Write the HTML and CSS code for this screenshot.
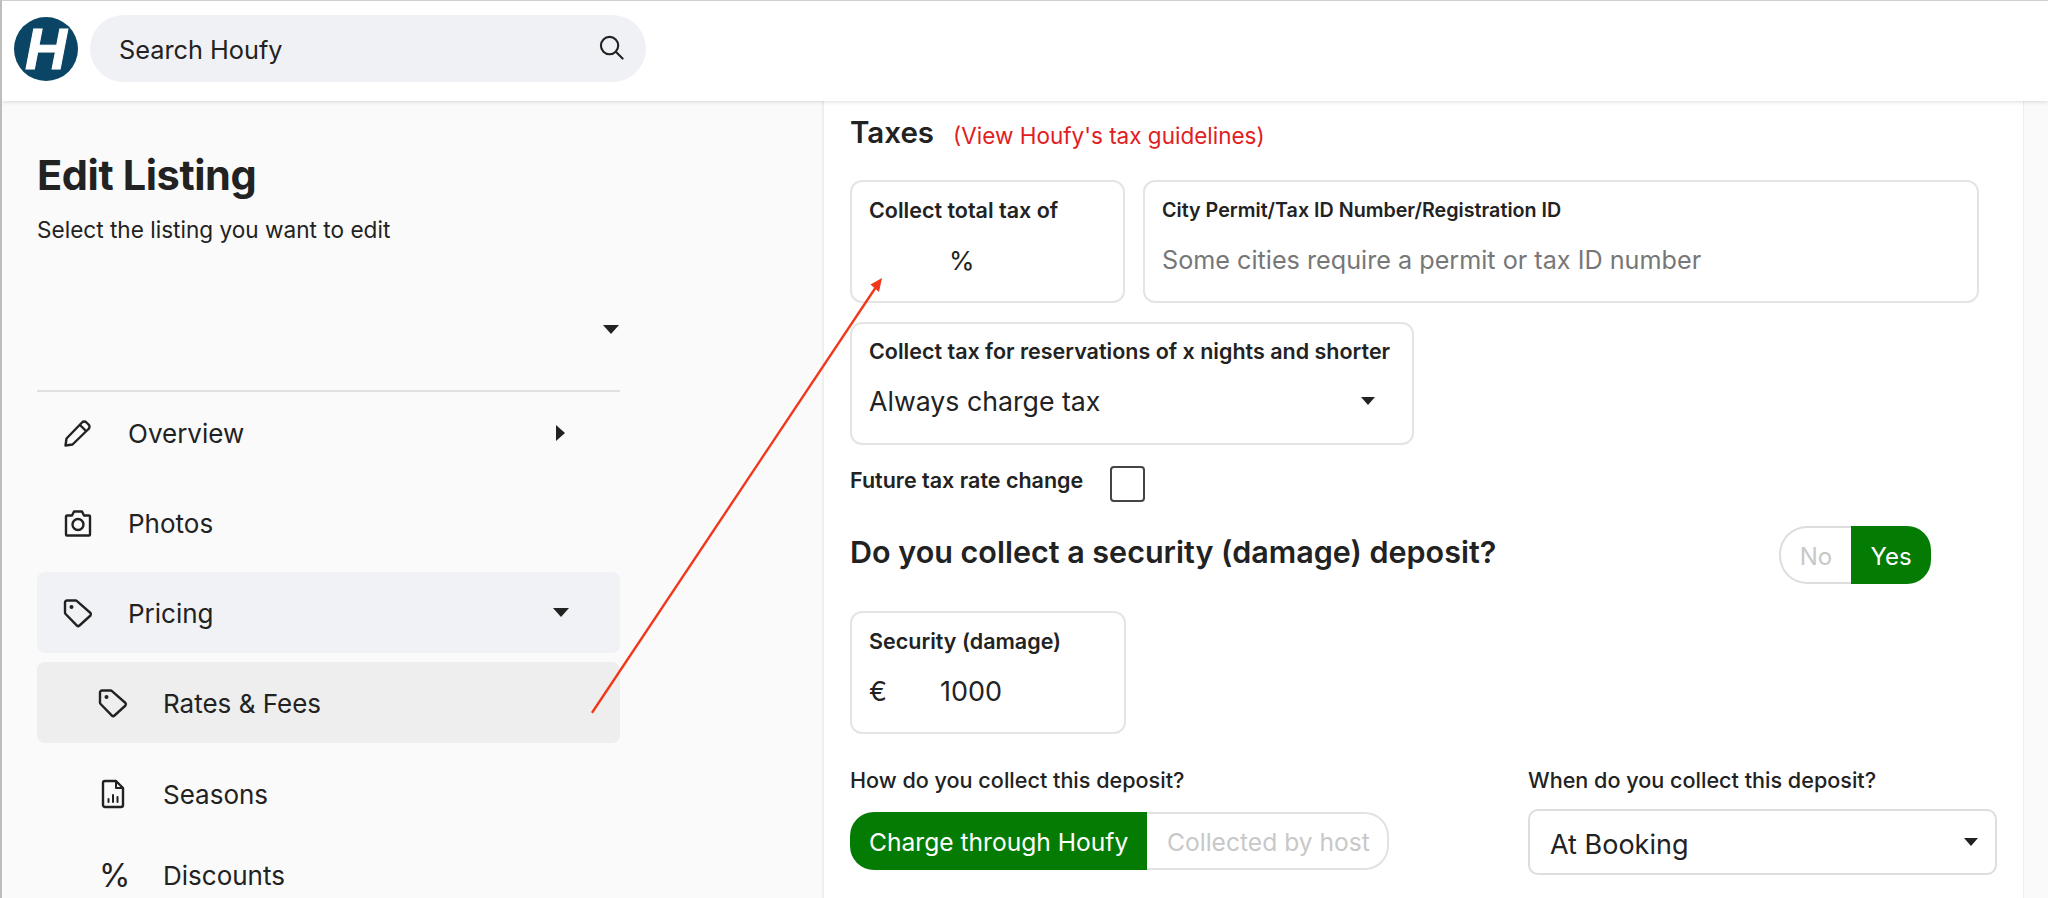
FILE: index.html
```html
<!DOCTYPE html>
<html lang="en">
<head>
<meta charset="utf-8">
<title>Edit Listing</title>
<link rel="stylesheet" href="styles.css">
</head>
<body>
<div class="page">
  <header class="topbar">
    <div class="logo"><span class="logo-h">H</span></div>
    <div class="search">
      <span class="search-text">Search Houfy</span>
      <svg class="search-icon" viewBox="0 0 26 26" fill="none" stroke="#222" stroke-width="2.200" stroke-linecap="round"><circle cx="11" cy="11" r="9"/><path d="M17.500 17.500L24.500 24.500"/></svg>
    </div>
  </header>
  <div class="layout">
    <aside class="sidebar">
      <h1 class="side-title">Edit Listing</h1>
      <p class="side-sub">Select the listing you want to edit</p>
      <div class="listing-select"><span class="caret"></span></div>
      <nav class="nav">
        <div class="row row-overview">
          <svg class="icon" viewBox="0 0 28 28" fill="none" stroke="#222" stroke-width="2.400" stroke-linejoin="round"><path d="M1.500 26.500l1-7L18 3.500a3 3 0 0 1 4.500 0l2 2a3 3 0 0 1 0 4.500L8.500 25.500z"/><path d="M16 6l6 6"/></svg>
          <span class="row-text">Overview</span>
          <span class="caret-right"></span>
        </div>
        <div class="row row-photos">
          <svg class="icon" viewBox="0 0 28 28" fill="none" stroke="#222" stroke-width="2.400" stroke-linejoin="round"><path d="M2 7.500a1 1 0 0 1 1-1h5l2-4h8l2 4h5a1 1 0 0 1 1 1V25.500a1 1 0 0 1-1 1H3a1 1 0 0 1-1-1z"/><circle cx="14" cy="15.500" r="5.500"/></svg>
          <span class="row-text">Photos</span>
        </div>
        <div class="row row-open">
          <svg class="icon" viewBox="0 0 28 28" fill="none" stroke="#222" stroke-width="2.400" stroke-linejoin="round"><path d="M1 3.500a2 2 0 0 1 2-2h8.500a2 2 0 0 1 1.500.7L26.500 14a2 2 0 0 1 0 2.500L15.500 26.500a2 2 0 0 1-2.800-.1L1.600 15a2 2 0 0 1-.6-1.500z"/><circle cx="7.500" cy="8" r="2" fill="#222" stroke="none"/></svg>
          <span class="row-text">Pricing</span>
          <span class="caret caret-nav"></span>
        </div>
        <div class="row row-sub row-active">
          <svg class="icon" viewBox="0 0 28 28" fill="none" stroke="#222" stroke-width="2.400" stroke-linejoin="round"><path d="M1 3.500a2 2 0 0 1 2-2h8.500a2 2 0 0 1 1.500.7L26.500 14a2 2 0 0 1 0 2.500L15.500 26.500a2 2 0 0 1-2.800-.1L1.600 15a2 2 0 0 1-.6-1.500z"/><circle cx="7.500" cy="8" r="2" fill="#222" stroke="none"/></svg>
          <span class="row-text">Rates &amp; Fees</span>
        </div>
        <div class="row row-sub row-seasons">
          <svg class="icon" viewBox="0 0 28 28" fill="none" stroke="#222" stroke-width="2.400" stroke-linejoin="round" stroke-linecap="round"><path d="M4 3a2 2 0 0 1 2-2h11l7 7v17a2 2 0 0 1-2 2H6a2 2 0 0 1-2-2z"/><path d="M17 1v7h7" stroke-width="2"/><path d="M9.500 22v-3M14 22v-7M18.500 22v-5" stroke-width="2"/></svg>
          <span class="row-text">Seasons</span>
        </div>
        <div class="row row-sub row-discounts">
          <span class="icon icon-text">%</span>
          <span class="row-text">Discounts</span>
        </div>
      </nav>
    </aside>
    <main class="main">
      <div class="tax-head">
        <h2 class="tax-title">Taxes</h2>
        <span class="tax-link">(View Houfy's tax guidelines)</span>
      </div>
      <div class="tax-row">
        <div class="field field-rate">
          <div class="field-label">Collect total tax of</div>
          <div class="field-value"><span class="percent">%</span></div>
        </div>
        <div class="field field-permit">
          <div class="field-label field-label-tight">City Permit/Tax ID Number/Registration ID</div>
          <div class="field-value placeholder">Some cities require a permit or tax ID number</div>
        </div>
      </div>
      <div class="field field-nights">
        <div class="field-label">Collect tax for reservations of x nights and shorter</div>
        <div class="field-value field-select"><span>Always charge tax</span><span class="caret caret-small"></span></div>
      </div>
      <div class="future">
        <span class="future-label">Future tax rate change</span>
        <span class="checkbox"></span>
      </div>
      <div class="deposit-head">
        <h2 class="deposit-title">Do you collect a security (damage) deposit?</h2>
        <div class="toggle">
          <span class="toggle-off">No</span>
          <span class="toggle-on">Yes</span>
        </div>
      </div>
      <div class="field field-security">
        <div class="field-label">Security (damage)</div>
        <div class="field-value field-amount"><span class="currency">€</span><span>1000</span></div>
      </div>
      <div class="collect-grid">
        <div class="collect-how">
          <div class="collect-label">How do you collect this deposit?</div>
          <div class="segment">
            <span class="segment-on">Charge through Houfy</span>
            <span class="segment-off">Collected by host</span>
          </div>
        </div>
        <div class="collect-when">
          <div class="collect-label">When do you collect this deposit?</div>
          <div class="select-box"><span>At Booking</span><span class="caret caret-small"></span></div>
        </div>
      </div>
    </main>
  </div>
  <svg class="annotation" viewBox="0 0 2048 898" fill="none">
    <path d="M592.500 712L876 287" stroke="#f0391c" stroke-width="2.400" stroke-linecap="round"/>
    <path d="M882 278L870.500 284.500L879 292z" fill="#f0391c"/>
  </svg>
</div>
</body>
</html>
```
FILE: styles.css
```css
* { box-sizing: border-box; }
html, body { margin: 0; padding: 0; height: 898px; overflow: hidden; }
body { font-family: Inter, "Noto Sans", sans-serif; color: #222; background: #fafafa; }
h1, h2, p { margin: 0; }

.page { position: relative; width: 2048px; height: 898px; overflow: hidden; border-left: 2px solid #bdbdbd; border-top: 1px solid #d0d0d0; }

.topbar { position: relative; z-index: 1; height: 100px; display: flex; align-items: flex-start; padding: 14px 0 0 12px; gap: 12px; background: #fff; box-shadow: 0 1px 4px rgba(0,0,0,.14); }
.logo { width: 64px; height: 64px; margin-top: 2px; border-radius: 50%; background: #0b4566; display: flex; align-items: center; justify-content: center; }
.logo-h { font: italic 700 58px/60px "Liberation Sans", sans-serif; color: #fff; -webkit-text-stroke: 1px #fff; }
.search { width: 556px; height: 67px; border-radius: 34px; background: #f0f1f5; display: flex; align-items: center; justify-content: space-between; padding: 0 22px 0 29px; }
.search-text { padding-top: 2px; font-size: 25.300px; }
.search-icon { width: 25px; height: 25px; margin-bottom: 3px; }

.layout { display: flex; height: 797px; }
.sidebar { width: 820px; flex: none; padding: 49px 202px 0 35px; background: #fafafa; }
.side-title { font-size: 41.500px; line-height: 50px; font-weight: 700; letter-spacing: -.4px; }
.side-sub { margin-top: 17px; font-size: 22.600px; line-height: 26px; }
.listing-select { height: 149px; padding: 27px 1px 1px 0; display: flex; justify-content: flex-end; align-items: center; border-bottom: 2px solid #e0e0e0; }
.caret { display: block; width: 0; height: 0; border-left: 8px solid transparent; border-right: 8px solid transparent; border-top: 9px solid #222; flex: none; }
.caret-small { border-left-width: 7.500px; border-right-width: 7.500px; border-top-width: 8px; }

.nav { display: flex; flex-direction: column; }
.row { height: 81px; margin-bottom: 9px; display: flex; align-items: center; padding-left: 27px; gap: 36px; border-radius: 8px; font-size: 26px; }
.row-text { white-space: nowrap; }
.row-overview { height: 82px; margin-bottom: 8px; }
.row-photos { height: 84px; margin-bottom: 6px; padding-bottom: 2px; }
.row-open { background: #f1f2f6; margin-bottom: 9px; }
.row-open .row-text, .row-active .row-text { padding-top: 2px; }
.row-sub { padding-left: 62px; }
.row-active { background: #eeeeee; }
.row-seasons { height: 84px; margin-bottom: 0; }
.row-discounts { height: 79px; }
.icon { width: 28px; height: 28px; flex: none; overflow: visible; }
.icon-text { font-size: 32px; line-height: 28px; text-align: center; }
.caret-right { margin-left: auto; margin-right: 55px; width: 0; height: 0; border-top: 8px solid transparent; border-bottom: 8px solid transparent; border-left: 9px solid #222; }
.caret-nav { margin-left: auto; margin-right: 51px; }

.main { width: 1202px; flex: none; padding: 13px 0 0 26px; background: #fff; border-left: 2px solid #eee; border-right: 1px solid #eee; }
.tax-head { display: flex; align-items: flex-start; gap: 19px; height: 36px; line-height: 36px; }
.tax-title { font-size: 29.500px; line-height: 36px; font-weight: 600; }
.tax-link { margin-top: 4px; font-size: 22.500px; color: #e0201e; white-space: nowrap; }

.tax-row { display: flex; gap: 18px; margin-top: 30px; }
.field { height: 123px; border: 2px solid #e4e4e4; border-radius: 12px; padding: 15px 17px 0; background: #fff; }
.field-rate { width: 275px; }
.field-permit { width: 836px; }
.field-nights { width: 564px; margin-top: 19px; padding-top: 14px; }
.field-security { width: 276px; margin-top: 27px; }
.field-label { font-size: 21.500px; line-height: 26px; font-weight: 600; white-space: nowrap; }
.field-label-tight { font-size: 19.700px; }
.field-value { display: flex; align-items: center; height: 36px; margin-top: 20px; font-size: 25.200px; line-height: 36px; white-space: nowrap; }
.field-permit .field-value { margin-top: 19px; }
.field-select { justify-content: space-between; margin-top: 19px; padding-right: 20px; font-size: 26.700px; }
.field-amount { font-size: 27px; }
.placeholder { color: #777; }
.percent { margin-left: 80px; font-size: 26px; }
.currency { width: 71px; }

.future { display: flex; align-items: flex-start; height: 36px; margin-top: 21px; gap: 27px; }
.future-label { font-size: 21.500px; line-height: 28px; font-weight: 600; white-space: nowrap; }
.checkbox { width: 35px; height: 36px; border: 2px solid #444; border-radius: 4px; background: #fff; }

.deposit-head { display: flex; justify-content: space-between; align-items: flex-start; width: 1081px; margin-top: 24px; }
.deposit-title { font-size: 30.500px; line-height: 52px; font-weight: 600; white-space: nowrap; }
.toggle { display: flex; width: 152px; height: 58px; font-size: 24px; }
.toggle-off { width: 72px; display: flex; align-items: center; justify-content: center; padding-top: 2px; color: #c8c8c8; border: 2px solid #ddd; border-right: 0; border-radius: 28px 0 0 28px; }
.toggle-on { width: 80px; display: flex; align-items: center; justify-content: center; padding-top: 2px; color: #fff; background: #047c04; border-radius: 0 24px 24px 0; }

.collect-grid { display: grid; grid-template-columns: 678px 469px; margin-top: 33px; }
.collect-label { font-size: 21.600px; line-height: 26px; font-weight: 500; white-space: nowrap; }
.segment { display: flex; width: 539px; height: 58px; margin-top: 19px; font-size: 24.600px; }
.segment-on { width: 297px; display: flex; align-items: center; padding: 2px 0 0 19px; color: #fff; background: #047c04; border-radius: 24px 0 0 24px; white-space: nowrap; }
.segment-off { flex: 1; display: flex; align-items: center; padding: 2px 0 0 20px; color: #c8c8c8; border: 2px solid #e2e2e2; border-left: 0; border-radius: 0 24px 24px 0; white-space: nowrap; }
.select-box { display: flex; align-items: center; justify-content: space-between; height: 66px; margin-top: 16px; padding: 5px 17px 0 20px; border: 2px solid #ddd; border-radius: 10px; font-size: 27px; }
.select-box .caret { margin-bottom: 5px; }

.annotation { position: absolute; left: -2px; top: -1px; width: 2048px; height: 898px; z-index: 2; pointer-events: none; }
```
